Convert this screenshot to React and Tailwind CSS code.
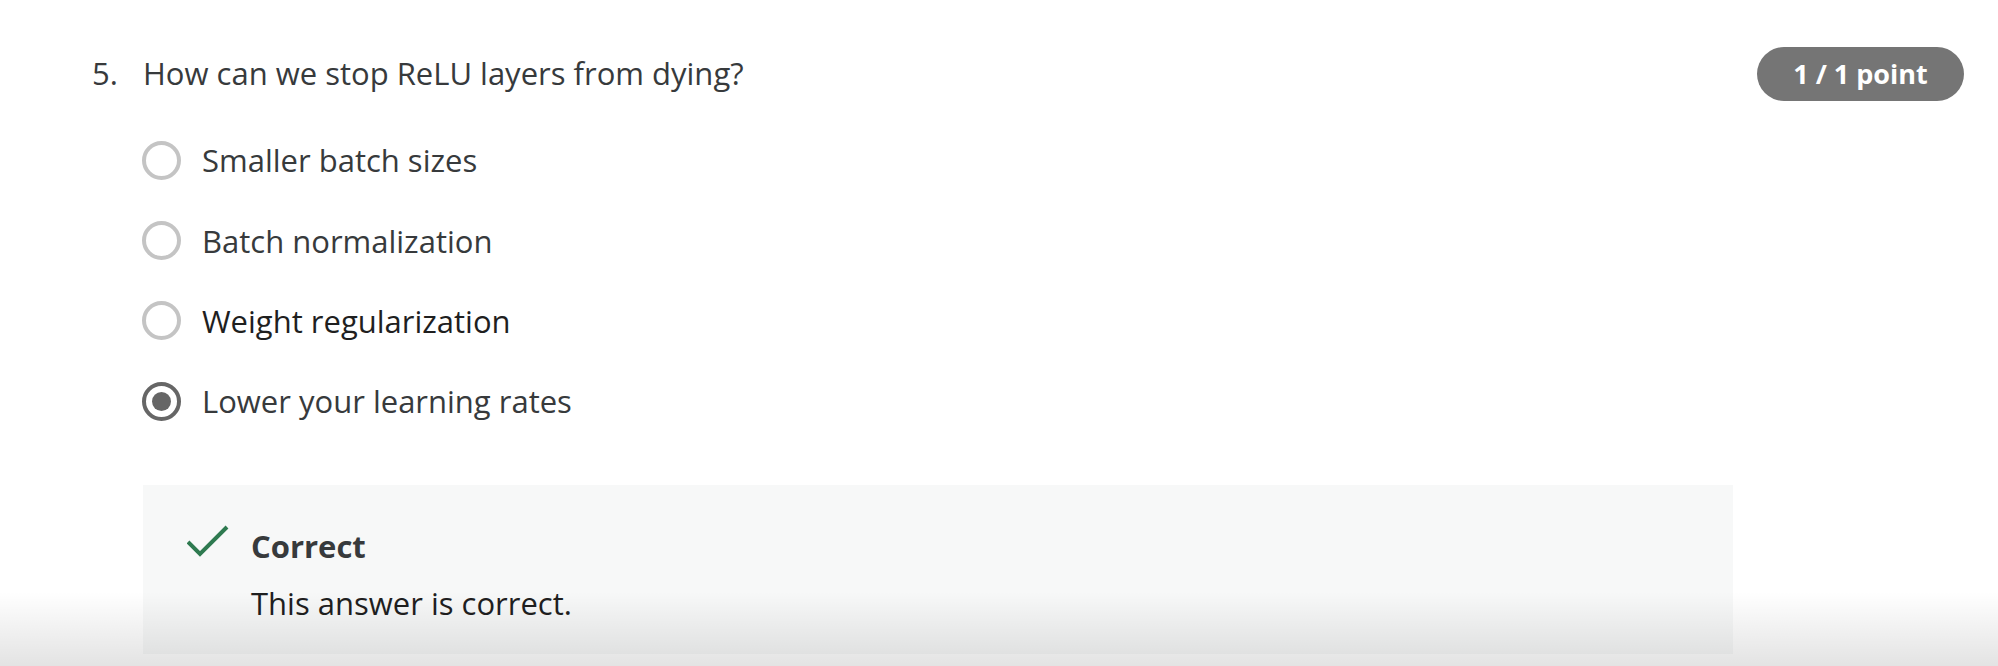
import React from "react";

function Radio({ checked }) {
  if (checked) {
    return (
      <span className="flex h-[39px] w-[39px] shrink-0 items-center justify-center rounded-full border-[4px] border-[#666666]">
        <span className="h-[19px] w-[19px] rounded-full bg-[#666666]" />
      </span>
    );
  }
  return <span className="h-[39px] w-[39px] shrink-0 rounded-full border-[4px] border-[#c4c4c4]" />;
}

const options = [
  { label: "Smaller batch sizes", color: "text-[#373a3c]" },
  { label: "Batch normalization", color: "text-[#373a3c]" },
  { label: "Weight regularization", color: "text-[#1f1f1f]" },
  { label: "Lower your learning rates", color: "text-[#373a3c]", checked: true },
];

export default function App() {
  return (
    <div className="relative h-[666px] w-full overflow-hidden bg-white font-['Open_Sans',sans-serif]">
      <div className="flex pl-[92px] pr-[34px] pt-[53px]">
        <div className="w-[51px] shrink-0 text-[31px] leading-[40px] text-[#373a3c]">5.</div>
        <div className="flex-1">
          <div className="text-[31px] leading-[40px] text-[#373a3c]">
            How can we stop ReLU layers from dying?
          </div>
          <div className="mt-[27px] flex flex-col">
            {options.map((o) => (
              <div key={o.label} className="flex h-[80.4px] items-center">
                <span className="ml-[-1px] flex">
                  <Radio checked={o.checked} />
                </span>
                <span className={`ml-[21px] text-[31px] leading-[40px] ${o.color}`}>{o.label}</span>
              </div>
            ))}
          </div>
          <div className="mt-[43px] h-[169px] bg-[#f7f8f8] pl-[44px] pt-[41px]">
            <div className="flex h-[40px] items-center">
              <svg width="42" height="32" viewBox="0 0 42 32" className="mt-[-9px] shrink-0">
                <polyline
                  points="1,17 13,29 40,2"
                  fill="none"
                  stroke="#2e7a50"
                  strokeWidth="4"
                />
              </svg>
              <span className="ml-[22px] text-[31px] font-bold leading-[40px] text-[#373a3c]">Correct</span>
            </div>
            <div className="mt-[17px] pl-[64px] text-[31px] leading-[40px] text-[#1f1f1f]">
              This answer is correct.
            </div>
          </div>
        </div>
        <div className="ml-[24px] mt-[-6px] flex h-[54px] w-[207px] shrink-0 items-center justify-center rounded-full bg-[#757575] text-[27px] font-bold text-white">
          1 / 1 point
        </div>
      </div>
      <div className="pointer-events-none absolute bottom-0 left-0 right-0 h-[74px] bg-gradient-to-b from-[rgba(0,0,0,0)] to-[rgba(0,0,0,0.11)]" />
    </div>
  );
}
